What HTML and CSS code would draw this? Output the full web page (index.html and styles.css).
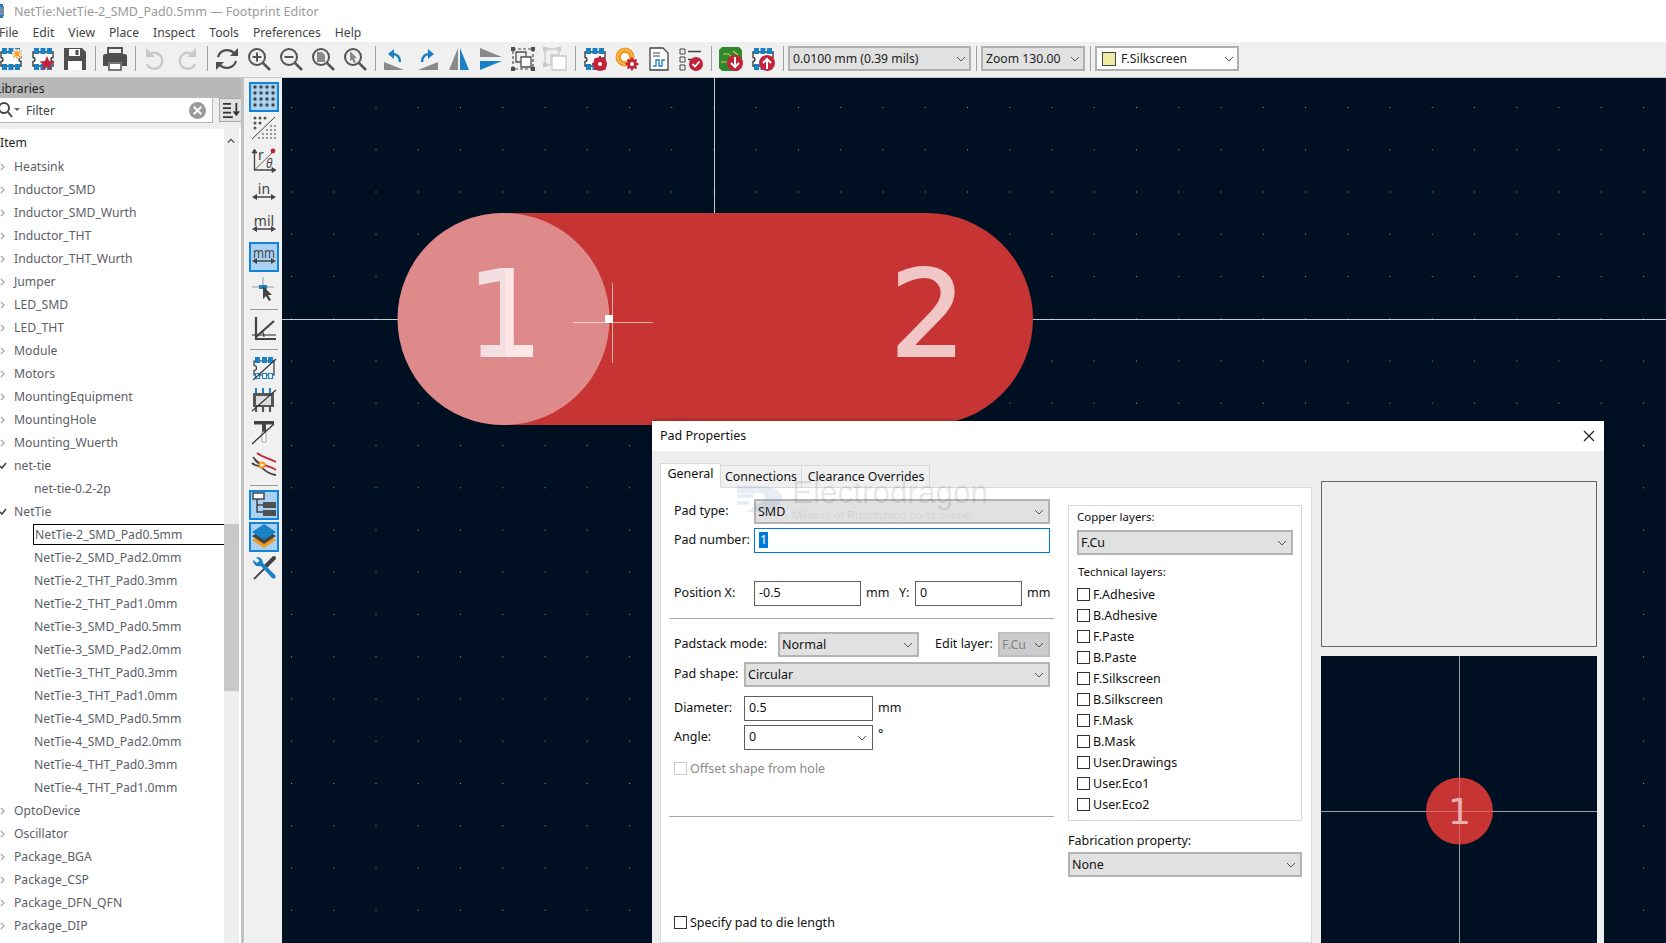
FILE: index.html
```html
<!DOCTYPE html>
<html lang="en">
<head>
<meta charset="utf-8">
<title>Footprint Editor</title>
<link rel="stylesheet" href="styles.css">
</head>
<body>
<svg class="defs" width="0" height="0" aria-hidden="true">
  <defs>
    <symbol id="chev" viewBox="0 0 10 6"><path d="M1 1l4 4 4-4" fill="none" stroke="#555" stroke-width="1"/></symbol>
    <symbol id="chip" viewBox="0 0 24 24">
      <path d="M2 5h20v5.500a2 2 0 0 0 0 4V19H2v-4.500a2 2 0 0 0 0-4z" fill="#fff" stroke="#333" stroke-width="1.300"/>
      <path d="M3 1h5v6H3zM9.500 1h5v6h-5zM16 1h5v6h-5zM3 17h5v6H3zM9.500 17h5v6h-5zM16 17h5v6h-5z" fill="#1a81c4"/>
    </symbol>
    <symbol id="mag" viewBox="0 0 24 24">
      <circle cx="10" cy="10" r="8" fill="none" stroke="#545454" stroke-width="2"/>
      <path d="M16 16l7 7" stroke="#545454" stroke-width="2.500"/>
    </symbol>
  </defs>
</svg>

<header class="titlebar">
  <svg class="app-icon" viewBox="0 0 14 14"><rect x="0" y="2" width="9" height="10" fill="#6d8ea8"/><path d="M0 0h3v3H0zM5 0h3v3H5zM0 11h3v3H0zM5 11h3v3H5z" fill="#1a81c4"/></svg>
  <span class="title-text">NetTie:NetTie-2_SMD_Pad0.5mm — Footprint Editor</span>
</header>

<nav class="menubar">
  <span>File</span><span>Edit</span><span>View</span><span>Place</span><span>Inspect</span><span>Tools</span><span>Preferences</span><span>Help</span>
</nav>

<div class="toolbar">
  <span class="tool"><svg viewBox="0 0 24 24"><use href="#chip"/><circle cx="18" cy="7" r="5" fill="#fff"/><path d="M18 2v10M13 7h10M14.500 3.500l7 7M21.500 3.500l-7 7" stroke="#f39a1e" stroke-width="1.200"/></svg></span>
  <span class="tool"><svg viewBox="0 0 24 24"><use href="#chip"/><path d="M16 9l2.200 5 5.300.4-4 3.500 1.300 5.300-4.800-2.900-4.800 2.900 1.300-5.300-4-3.500 5.300-.4z" fill="#c1243a"/></svg></span>
  <span class="tool"><svg viewBox="0 0 24 24"><path d="M1 1h18l4 4v18H1z" fill="#4f4f4f"/><path d="M6 2h11v7H6z" fill="#fff"/><path d="M12.500 3h3v5h-3z" fill="#4f4f4f"/><path d="M5 14h14v9H5z" fill="#fff"/></svg></span>
  <span class="tool-sep"></span>
  <span class="tool"><svg viewBox="0 0 24 24"><path d="M5 1h14v6H5z" fill="none" stroke="#4f4f4f" stroke-width="1.800"/><path d="M0 9a2 2 0 0 1 2-2h20a2 2 0 0 1 2 2v10h-5v-4H5v4H0z" fill="#4f4f4f"/><path d="M6 16h12v7H6z" fill="#fff" stroke="#4f4f4f" stroke-width="1.500"/></svg></span>
  <span class="tool-sep"></span>
  <span class="tool"><svg viewBox="0 0 24 24"><path d="M7 7a8 8 0 1 1-3 10" fill="none" stroke="#c9c9c9" stroke-width="2.400"/><path d="M3 1v9h9z" fill="#c9c9c9"/></svg></span>
  <span class="tool"><svg viewBox="0 0 24 24"><path d="M17 7a8 8 0 1 0 3 10" fill="none" stroke="#c9c9c9" stroke-width="2.400"/><path d="M21 1v9h-9z" fill="#c9c9c9"/></svg></span>
  <span class="tool-sep"></span>
  <span class="tool"><svg viewBox="0 0 24 24"><path d="M3 10a9.500 9.500 0 0 1 16-4M21 14a9.500 9.500 0 0 1-16 4" fill="none" stroke="#4f4f4f" stroke-width="2.200"/><path d="M23 1v8h-8zM1 23v-8h8z" fill="#4f4f4f"/></svg></span>
  <span class="tool"><svg viewBox="0 0 24 24"><use href="#mag"/><path d="M10 5.500v9M5.500 10h9" stroke="#545454" stroke-width="2"/></svg></span>
  <span class="tool"><svg viewBox="0 0 24 24"><use href="#mag"/><path d="M5.500 10h9" stroke="#545454" stroke-width="2"/></svg></span>
  <span class="tool"><svg viewBox="0 0 24 24"><use href="#mag"/><path d="M6 5h5l3 3v7H6z" fill="#8a8a8a"/></svg></span>
  <span class="tool"><svg viewBox="0 0 24 24"><use href="#mag"/><path d="M7 4l7 7-3 .5 2 3.500-2 1-2-3.500-2 2z" fill="#8a8a8a"/></svg></span>
  <span class="tool-sep"></span>
  <span class="tool"><svg viewBox="0 0 24 24"><path d="M1 15l20 8H1z" fill="#8a8a8a"/><path d="M17 15c0-5-3-8-7-8" fill="none" stroke="#1a81c4" stroke-width="2.400"/><path d="M11 2v10l-6-5z" fill="#1a81c4"/></svg></span>
  <span class="tool"><svg viewBox="0 0 24 24"><path d="M23 15L3 23h20z" fill="#8a8a8a"/><path d="M7 15c0-5 3-8 7-8" fill="none" stroke="#1a81c4" stroke-width="2.400"/><path d="M13 2v10l6-5z" fill="#1a81c4"/></svg></span>
  <span class="tool"><svg viewBox="0 0 24 24"><path d="M11 1v22H2z" fill="#8a8a8a"/><path d="M13 1v22h9z" fill="#1a81c4"/></svg></span>
  <span class="tool"><svg viewBox="0 0 24 24"><path d="M1 1l22 9H1z" fill="#8a8a8a"/><path d="M1 14h22L1 23z" fill="#1a81c4"/></svg></span>
  <span class="tool"><svg viewBox="0 0 24 24"><path d="M2 2h20v20H2z" fill="none" stroke="#4f4f4f" stroke-width="1.200" stroke-dasharray="3 2"/><path d="M0 0h4v4H0zM20 0h4v4h-4zM0 20h4v4H0zM20 20h4v4h-4z" fill="#4f4f4f"/><path d="M5 5h10v10H5z" fill="none" stroke="#4f4f4f" stroke-width="1.300"/><path d="M10 10h10v10H10z" fill="#fff" stroke="#4f4f4f" stroke-width="1.300"/></svg></span>
  <span class="tool"><svg viewBox="0 0 24 24"><path d="M2 2h14v6H8v10H2z" fill="none" stroke="#c9c9c9" stroke-width="1.300"/><path d="M0 0h4v4H0zM14 0h4v4h-4zM0 16h4v4H0z" fill="#c9c9c9"/><path d="M9 9h14v14H9z" fill="#fff" stroke="#c9c9c9" stroke-width="1.300"/></svg></span>
  <span class="tool-sep"></span>
  <span class="tool"><svg viewBox="0 0 24 24"><use href="#chip"/><circle cx="17" cy="17" r="7" fill="#c1243a"/><circle cx="17" cy="17" r="2.500" fill="#fff"/><path d="M17 9v16M9 17h16M11.500 11.500l11 11M22.500 11.500l-11 11" stroke="#c1243a" stroke-width="2"/><circle cx="17" cy="17" r="2" fill="#fff"/></svg></span>
  <span class="tool"><svg viewBox="0 0 24 24"><circle cx="10" cy="10" r="8.500" fill="none" stroke="#f39a1e" stroke-width="2"/><circle cx="10" cy="10" r="5.500" fill="#fff" stroke="#f39a1e" stroke-width="3"/><circle cx="17" cy="17" r="5" fill="#c1243a"/><path d="M17 10.500v13M10.500 17h13M12.500 12.500l9 9M21.500 12.500l-9 9" stroke="#c1243a" stroke-width="2"/><circle cx="17" cy="17" r="2" fill="#fff"/></svg></span>
  <span class="tool"><svg viewBox="0 0 24 24"><path d="M3 1h13l5 5v17H3z" fill="#fff" stroke="#444" stroke-width="1.300"/><path d="M6 6h7M6 9h7" stroke="#444"/><path d="M6 19h3v-6h3v6h3v-6h3" fill="none" stroke="#1a81c4" stroke-width="1.300"/></svg></span>
  <span class="tool"><svg viewBox="0 0 24 24"><path d="M1 2h5v5H1zM1 10h5v5H1zM1 18h5v5H1z" fill="none" stroke="#444"/><path d="M9 4.500h13M9 12.500h3" stroke="#444" stroke-width="1.400"/><circle cx="17" cy="17" r="7" fill="#c1243a"/><path d="M13.500 17l2.500 2.500 4.500-5" fill="none" stroke="#fff" stroke-width="1.800"/></svg></span>
  <span class="tool-sep"></span>
  <span class="tool"><svg viewBox="0 0 24 24"><path d="M3 0h17l3 3v17l-4 4H3l-3-3V3z" fill="#2f8a2f"/><path d="M4 7h6l3 4M2 15l6 0M14 4l5 4" fill="none" stroke="#d9c94a" stroke-width="1.200"/><circle cx="16" cy="16" r="8" fill="#c1243a"/><path d="M16 10v10M12 16l4 4 4-4" fill="none" stroke="#fff" stroke-width="2"/></svg></span>
  <span class="tool"><svg viewBox="0 0 24 24"><use href="#chip"/><circle cx="16" cy="16" r="8" fill="#c1243a"/><path d="M16 22V12M12 16l4-4 4 4" fill="none" stroke="#fff" stroke-width="2"/></svg></span>
  <span class="tool-sep"></span>
  <div class="combo combo-grid"><span>0.0100 mm (0.39 mils)</span><svg class="chev"><use href="#chev"/></svg></div>
  <span class="tool-sep tool-sep-narrow"></span>
  <div class="combo combo-zoom"><span>Zoom 130.00</span><svg class="chev"><use href="#chev"/></svg></div>
  <span class="tool-sep tool-sep-narrow"></span>
  <div class="combo combo-layer"><i class="swatch"></i><span>F.Silkscreen</span><svg class="chev"><use href="#chev"/></svg></div>
</div>

<main class="workspace">
  <aside class="sidebar">
    <div class="side-title"><span>Libraries</span></div>
    <div class="filter-row">
      <div class="filter">
        <svg class="filter-mag" viewBox="0 0 24 16"><circle cx="5" cy="6" r="5" fill="none" stroke="#444" stroke-width="2"/><path d="M9 10l4 5" stroke="#444" stroke-width="2"/><path d="M15 6h6l-3 3z" fill="#666"/></svg>
        <span class="filter-text">Filter</span>
        <svg class="filter-clear" viewBox="0 0 18 18"><circle cx="9" cy="9" r="9" fill="#9a9a9a"/><path d="M5 5l8 8M13 5l-8 8" stroke="#fff" stroke-width="2"/></svg>
      </div>
      <div class="sort-btn"><svg viewBox="0 0 20 18"><path d="M1 2h9M1 7h9M1 12h9M1 17h11" stroke="#333" stroke-width="2"/><path d="M16 1v13M13 10.500l3 4 3-4" fill="none" stroke="#333" stroke-width="2"/></svg></div>
    </div>
    <div class="tree-wrap">
      <div class="tree">
        <div class="tree-head">Item</div>
        <div class="node"><svg class="tw"><path d="M1 1l3 3-3 3"/></svg>Heatsink</div>
        <div class="node"><svg class="tw"><path d="M1 1l3 3-3 3"/></svg>Inductor_SMD</div>
        <div class="node"><svg class="tw"><path d="M1 1l3 3-3 3"/></svg>Inductor_SMD_Wurth</div>
        <div class="node"><svg class="tw"><path d="M1 1l3 3-3 3"/></svg>Inductor_THT</div>
        <div class="node"><svg class="tw"><path d="M1 1l3 3-3 3"/></svg>Inductor_THT_Wurth</div>
        <div class="node"><svg class="tw"><path d="M1 1l3 3-3 3"/></svg>Jumper</div>
        <div class="node"><svg class="tw"><path d="M1 1l3 3-3 3"/></svg>LED_SMD</div>
        <div class="node"><svg class="tw"><path d="M1 1l3 3-3 3"/></svg>LED_THT</div>
        <div class="node"><svg class="tw"><path d="M1 1l3 3-3 3"/></svg>Module</div>
        <div class="node"><svg class="tw"><path d="M1 1l3 3-3 3"/></svg>Motors</div>
        <div class="node"><svg class="tw"><path d="M1 1l3 3-3 3"/></svg>MountingEquipment</div>
        <div class="node"><svg class="tw"><path d="M1 1l3 3-3 3"/></svg>MountingHole</div>
        <div class="node"><svg class="tw"><path d="M1 1l3 3-3 3"/></svg>Mounting_Wuerth</div>
        <div class="node"><svg class="tw tw-open"><path d="M0 4l2 2 4-5"/></svg>net-tie</div>
        <div class="node child">net-tie-0.2-2p</div>
        <div class="node"><svg class="tw tw-open"><path d="M0 4l2 2 4-5"/></svg>NetTie</div>
        <div class="node child selected"><span>NetTie-2_SMD_Pad0.5mm</span></div>
        <div class="node child">NetTie-2_SMD_Pad2.0mm</div>
        <div class="node child">NetTie-2_THT_Pad0.3mm</div>
        <div class="node child">NetTie-2_THT_Pad1.0mm</div>
        <div class="node child">NetTie-3_SMD_Pad0.5mm</div>
        <div class="node child">NetTie-3_SMD_Pad2.0mm</div>
        <div class="node child">NetTie-3_THT_Pad0.3mm</div>
        <div class="node child">NetTie-3_THT_Pad1.0mm</div>
        <div class="node child">NetTie-4_SMD_Pad0.5mm</div>
        <div class="node child">NetTie-4_SMD_Pad2.0mm</div>
        <div class="node child">NetTie-4_THT_Pad0.3mm</div>
        <div class="node child">NetTie-4_THT_Pad1.0mm</div>
        <div class="node"><svg class="tw"><path d="M1 1l3 3-3 3"/></svg>OptoDevice</div>
        <div class="node"><svg class="tw"><path d="M1 1l3 3-3 3"/></svg>Oscillator</div>
        <div class="node"><svg class="tw"><path d="M1 1l3 3-3 3"/></svg>Package_BGA</div>
        <div class="node"><svg class="tw"><path d="M1 1l3 3-3 3"/></svg>Package_CSP</div>
        <div class="node"><svg class="tw"><path d="M1 1l3 3-3 3"/></svg>Package_DFN_QFN</div>
        <div class="node"><svg class="tw"><path d="M1 1l3 3-3 3"/></svg>Package_DIP</div>
      </div>
      <div class="scrollbar">
        <svg class="scroll-up" viewBox="0 0 10 6"><path d="M1 5l4-4 4 4" fill="none" stroke="#444" stroke-width="1.500"/></svg>
        <div class="scroll-thumb"></div>
      </div>
    </div>
  </aside>

  <div class="strip">
    <span class="sbtn on"><svg viewBox="0 0 24 24"><g fill="#444"><circle cx="3" cy="3" r="1.700"/><circle cx="9" cy="3" r="1.700"/><circle cx="15" cy="3" r="1.700"/><circle cx="21" cy="3" r="1.700"/><circle cx="3" cy="9" r="1.700"/><circle cx="9" cy="9" r="1.700"/><circle cx="15" cy="9" r="1.700"/><circle cx="21" cy="9" r="1.700"/><circle cx="3" cy="15" r="1.700"/><circle cx="9" cy="15" r="1.700"/><circle cx="15" cy="15" r="1.700"/><circle cx="21" cy="15" r="1.700"/><circle cx="3" cy="21" r="1.700"/><circle cx="9" cy="21" r="1.700"/><circle cx="15" cy="21" r="1.700"/><circle cx="21" cy="21" r="1.700"/></g></svg></span>
    <span class="sbtn"><svg viewBox="0 0 24 24"><g fill="#555"><circle cx="3" cy="2" r="1.500"/><circle cx="8" cy="2" r="1.500"/><circle cx="13" cy="2" r="1.500"/><circle cx="3" cy="7" r="1.500"/><circle cx="8" cy="7" r="1.500"/><circle cx="3" cy="12" r="1.500"/></g><g fill="#999"><path d="M18 9h2v2h-2zM22 9h2v2h-2zM14 13h2v2h-2zM18 13h2v2h-2zM22 13h2v2h-2zM10 17h2v2h-2zM14 17h2v2h-2zM18 17h2v2h-2zM22 17h2v2h-2zM6 21h2v2H6zM10 21h2v2h-2zM14 21h2v2h-2zM18 21h2v2h-2zM22 21h2v2h-2z"/></g><path d="M0 23L23 1" stroke="#444"/></svg></span>
    <span class="sbtn"><svg viewBox="0 0 24 24"><path d="M2.500 2v20H23" fill="none" stroke="#444" stroke-width="1.300"/><path d="M0 5l2.500-4L5 5zM20 19.500l4 2.500-4 2.500zM2.500 22L22 3" fill="#444" stroke="#444" stroke-width=".8"/><circle cx="21" cy="3" r="2.400" fill="#c1243a"/><text x="6" y="12" class="icon-text it-r">r</text><text x="14" y="20" class="icon-text it-t">θ</text></svg></span>
    <span class="sbtn"><svg viewBox="0 0 24 24"><text x="12" y="14" text-anchor="middle" class="icon-text it-u">in</text><path d="M2 17h20" stroke="#444" stroke-width="1.500"/><path d="M0 17l5-3v6zM24 17l-5-3v6z" fill="#444"/></svg></span>
    <span class="sbtn"><svg viewBox="0 0 24 24"><text x="12" y="14" text-anchor="middle" class="icon-text it-u">mil</text><path d="M2 17h20" stroke="#444" stroke-width="1.500"/><path d="M0 17l5-3v6zM24 17l-5-3v6z" fill="#444"/></svg></span>
    <span class="sbtn on"><svg viewBox="0 0 24 24"><text x="1" y="14" textLength="22" lengthAdjust="spacingAndGlyphs" class="icon-text it-u">mm</text><path d="M2 17h20" stroke="#444" stroke-width="1.500"/><path d="M0 17l5-3v6zM24 17l-5-3v6z" fill="#444"/></svg></span>
    <span class="sbtn"><svg viewBox="0 0 24 24"><path d="M11 1v9M0 11h22" stroke="#999"/><rect x="7" y="9" width="8" height="4" fill="#1a81c4"/><path d="M11 10v13l3-3 3 5 2-1-3-5h4z" fill="#444"/></svg></span>
    <span class="strip-sep"></span>
    <span class="sbtn"><svg viewBox="0 0 24 24"><path d="M4 1v22H24" fill="none" stroke="#444" stroke-width="2.200"/><path d="M0 19h24" stroke="#444" stroke-width="1.200"/><path d="M4 21L22 5" stroke="#444" stroke-width="2.200"/><path d="M10 15a8 8 0 0 1 2 6" fill="none" stroke="#444" stroke-width="1.200"/></svg></span>
    <span class="strip-sep"></span>
    <span class="sbtn"><svg viewBox="0 0 24 24"><path d="M2 5h20v14H2v-4.500a2.500 2.500 0 0 0 0-5z" fill="none" stroke="#333" stroke-width="1.200"/><path d="M3 1h5v6H3zM10 1h5v6h-5zM16 1h5v6h-5z" fill="#1a81c4"/><path d="M3.500 17.500h4v5h-4zM10.500 17.500h4v5h-4zM16.500 17.500h4v5h-4z" fill="#fff" stroke="#1a81c4" stroke-width="1.200"/><path d="M1 24L24 3" stroke="#333" stroke-width="1.200"/></svg></span>
    <span class="sbtn"><svg viewBox="0 0 24 24"><path d="M4 0v6M11 0v6M18 0v6" stroke="#1a81c4" stroke-width="2"/><rect x="1" y="5" width="21" height="14" fill="#555"/><rect x="4" y="8" width="15" height="9" fill="#ddd"/><path d="M4 19v5M11 19v5M18 19v5" stroke="#555" stroke-width="2.200"/><path d="M0 23L24 2" stroke="#333" stroke-width="1.200"/></svg></span>
    <span class="sbtn"><svg viewBox="0 0 24 24"><path d="M2 1h20v3.500H14V12h-4V4.500H2z" fill="#444"/><path d="M10 12h4v10h-4z" fill="#fff" stroke="#aaa"/><path d="M0 24L22 4" stroke="#333" stroke-width="1.200"/></svg></span>
    <span class="sbtn"><svg viewBox="0 0 24 24"><path d="M5 1c6 5 10 4 19 9M3 8c6 6 14 5 21 10" fill="none" stroke="#c1243a" stroke-width="1.800"/><path d="M0 11c3 3 6 2 9 4s6 7 15 8" fill="none" stroke="#444" stroke-width="1.800"/><path d="M1 5L8 13" fill="none" stroke="#444" stroke-width="1.800"/><circle cx="10" cy="13" r="2.600" fill="#fff" stroke="#f39a1e" stroke-width="2"/></svg></span>
    <span class="strip-sep"></span>
    <span class="sbtn on"><svg viewBox="0 0 24 24"><rect x="1" y="1" width="11" height="6" fill="#fff" stroke="#444" stroke-width="1.500"/><path d="M5 7v13h6M5 13h6" fill="none" stroke="#444" stroke-width="1.500"/><rect x="11" y="10" width="13" height="6" fill="#4f4f4f"/><rect x="11" y="18" width="13" height="6" fill="#4f4f4f"/></svg></span>
    <span class="sbtn on"><svg viewBox="0 0 24 24"><path d="M12 9l12 7-12 8-12-8z" fill="#f39a1e"/><path d="M12 5l12 7-12 8-12-8z" fill="#444"/><path d="M12 0l12 8-12 8L0 8z" fill="#1a81c4"/></svg></span>
    <span class="sbtn"><svg viewBox="0 0 24 24"><path d="M15 10L2 23" stroke="#444" stroke-width="1.800"/><path d="M14 10l8-8" stroke="#444" stroke-width="4" stroke-linecap="round"/><path d="M1 4a6 6 0 0 0 8 6l11 12a2 2 0 0 0 3-3L11 7a6 6 0 0 0-7-6l3.500 3.500-2.500 2.500z" fill="#1a81c4"/></svg></span>
  </div>

  <section class="canvas">
    <svg class="board" viewBox="282 78 1384 865" preserveAspectRatio="xMinYMin">
      <defs>
        <pattern id="gridDots" x="291" y="107" width="42.25" height="42.25" patternUnits="userSpaceOnUse"><rect width="1" height="1" fill="#8d949c"/></pattern>
        <linearGradient id="oneFill" gradientUnits="userSpaceOnUse" x1="478" x2="531" y1="0" y2="0"><stop offset=".5" stop-color="#f3dfe2"/><stop offset=".5" stop-color="#fee6e7"/></linearGradient>
      </defs>
      <rect x="282" y="78" width="1384" height="865" fill="url(#gridDots)"/>
      <path d="M714.500 78V213M282 319.500H398M1033 319.500H1666" stroke="#c8cbce"/>
      <rect x="398" y="213" width="635" height="212" rx="106" fill="#c63434"/>
      <circle cx="503.500" cy="319" r="106" fill="#df8a8a"/>
      <text x="505" y="356" text-anchor="middle" class="pad-num" fill="url(#oneFill)" stroke="url(#oneFill)">1</text>
      <text x="928" y="356" text-anchor="middle" class="pad-num" fill="#f1c6c6" stroke="#f1c6c6">2</text>
      <path d="M612.500 283V363M573 322.500H653" stroke="#fff" stroke-opacity=".6"/>
      <rect x="605" y="315" width="8" height="8" fill="#fff"/>
    </svg>

    <div class="dialog">
      <div class="dlg-title">
        <span>Pad Properties</span>
        <svg class="dlg-close" viewBox="0 0 12 12"><path d="M1 1l10 10M11 1L1 11" stroke="#222" stroke-width="1.200"/></svg>
      </div>
      <div class="dlg-body">
        <div class="notebook">
          <div class="tabs">
            <span class="tab active">General</span><span class="tab tab-conn">Connections</span><span class="tab tab-clear">Clearance Overrides</span>
          </div>
          <div class="panel">
            <div class="watermark">
              <svg class="wm-logo" viewBox="0 0 45 32"><path d="M0 6h22c12 0 22 4 23 11 0 7-8 13-18 15H10l10-8c5-1 8-4 8-7 0-2-2-4-6-4H0zM0 14h16v4H0zM0 21h12v4H0z" fill="#6f8fc0" fill-opacity=".16"/></svg>
              <div class="wm-text">
                <span class="wm-big">Electrodragon</span>
                <span class="wm-small">Millions of Prototyping parts online!</span>
              </div>
            </div>
            <div class="col-left">
              <div class="row row-first"><label class="lbl w80">Pad type:</label><div class="select grow"><span>SMD</span><svg class="chev"><use href="#chev"/></svg></div></div>
              <div class="row gap-4"><label class="lbl w80">Pad number:</label><div class="input focus grow"><span class="selected-text">1</span></div></div>
              <div class="row gap-28">
                <label class="lbl w80">Position X:</label><div class="input w107"><span>-0.5</span></div>
                <span class="unit u-mm">mm</span><label class="lbl lbl-y">Y:</label><div class="input w107"><span>0</span></div><span class="unit">mm</span>
              </div>
              <hr class="rule rule-a">
              <div class="row">
                <label class="lbl w104">Padstack mode:</label><div class="select w141"><span>Normal</span><svg class="chev"><use href="#chev"/></svg></div>
                <label class="lbl lbl-edit">Edit layer:</label><div class="select disabled w52"><span>F.Cu</span><svg class="chev"><use href="#chev"/></svg></div>
              </div>
              <div class="row gap-5"><label class="lbl w70">Pad shape:</label><div class="select grow"><span>Circular</span><svg class="chev"><use href="#chev"/></svg></div></div>
              <div class="row gap-9"><label class="lbl w70">Diameter:</label><div class="input w129"><span>0.5</span></div><span class="unit">mm</span></div>
              <div class="row gap-4"><label class="lbl w70">Angle:</label><div class="input w129 input-combo"><span>0</span><svg class="chev"><use href="#chev"/></svg></div><span class="unit unit-deg">°</span></div>
              <div class="check-row dim offset-row"><i class="box"></i><span>Offset shape from hole</span></div>
              <hr class="rule rule-b">
              <div class="check-row die-row"><i class="box"></i><span>Specify pad to die length</span></div>
            </div>
            <div class="col-right">
              <div class="group">
                <div class="group-label">Copper layers:</div>
                <div class="select"><span>F.Cu</span><svg class="chev"><use href="#chev"/></svg></div>
                <div class="group-label tech">Technical layers:</div>
                <div class="check-list">
                  <div class="check-row"><i class="box"></i><span>F.Adhesive</span></div>
                  <div class="check-row"><i class="box"></i><span>B.Adhesive</span></div>
                  <div class="check-row"><i class="box"></i><span>F.Paste</span></div>
                  <div class="check-row"><i class="box"></i><span>B.Paste</span></div>
                  <div class="check-row"><i class="box"></i><span>F.Silkscreen</span></div>
                  <div class="check-row"><i class="box"></i><span>B.Silkscreen</span></div>
                  <div class="check-row"><i class="box"></i><span>F.Mask</span></div>
                  <div class="check-row"><i class="box"></i><span>B.Mask</span></div>
                  <div class="check-row"><i class="box"></i><span>User.Drawings</span></div>
                  <div class="check-row"><i class="box"></i><span>User.Eco1</span></div>
                  <div class="check-row"><i class="box"></i><span>User.Eco2</span></div>
                </div>
              </div>
              <div class="fab-label">Fabrication property:</div>
              <div class="select"><span>None</span><svg class="chev"><use href="#chev"/></svg></div>
            </div>
          </div>
        </div>
        <div class="preview">
          <div class="preview-top"></div>
          <div class="preview-canvas">
            <svg class="preview-svg" viewBox="0 0 276 287" preserveAspectRatio="xMinYMin">
              <path d="M138.500 0V287M0 155.500H276" stroke="#9a9ea3"/>
              <circle cx="138.500" cy="155" r="33.500" fill="#c63434"/>
              <path d="M138.500 122v66M105 155.500h67" stroke="#d98a8a" stroke-opacity=".6"/>
              <text x="138.500" y="168" text-anchor="middle" class="preview-num">1</text>
            </svg>
          </div>
        </div>
      </div>
    </div>
  </section>
</main>
</body>
</html>
```

FILE: styles.css
```css
* { box-sizing: border-box; }
html, body { margin: 0; height: 100%; overflow: hidden; }
body {
  display: flex;
  flex-direction: column;
  height: 943px;
  width: 1666px;
  font-family: "Noto Sans", "Open Sans", sans-serif;
  font-size: 12.5px;
  color: #1a1a1a;
  background: #f0f0f0;
}
.defs { position: absolute; }

/* window chrome */
.titlebar {
  height: 22px;
  background: #fff;
  display: flex;
  align-items: center;
  color: #9a9a9a;
  flex: none;
}
.app-icon { width: 14px; height: 14px; margin-left: -5px; margin-right: 5px; }
.menubar {
  height: 20px;
  background: #fff;
  display: flex;
  align-items: center;
  gap: 14px;
  color: #444;
  font-size: 12.2px;
  flex: none;
  margin-left: -1px;
}

/* main toolbar */
.toolbar {
  height: 36px;
  flex: none;
  display: flex;
  align-items: center;
  margin-left: -5px;
  padding-bottom: 2px;
  background: #f0f0f0;
  border-bottom: 1px solid #c9c9c9;
  font-size: 12.2px;
}
.tool { width: 32px; height: 24px; flex: none; display: flex; justify-content: center; }
.tool svg { width: 24px; height: 24px; display: block; }
.tool-sep { width: 8px; height: 25px; flex: none; display: flex; justify-content: center; position: relative; }
.tool-sep::before { content: ""; width: 1px; background: #a0a0a0; }
.tool-sep-narrow { width: 10px; }
.combo {
  height: 25px;
  display: flex;
  align-items: center;
  justify-content: space-between;
  border: 2px solid #b0b0b0;
  background: #e1e1e1;
  padding: 0 3px 0 3px;
  flex: none;
  color: #222;
}
.combo-grid { width: 183px; margin-left: 1px; }
.combo-zoom { width: 104px; }
.combo-layer { width: 144px; background: #fff; gap: 5px; justify-content: flex-start; padding-left: 5px; }
.combo-layer .chev { margin-left: auto; }
.chev { width: 10px; height: 6px; flex: none; }
.swatch { width: 14px; height: 14px; background: #f3eba4; border: 1px solid #444; flex: none; }

.workspace { flex: 1; display: flex; min-height: 0; }

/* libraries */
.sidebar { width: 241px; flex: none; display: flex; flex-direction: column; background: #eee; font-size: 12.2px; }
.side-title { height: 20px; background: #b8b8b8; display: flex; align-items: center; color: #222; margin-right: -1px; }
.side-title span { margin-left: -5px; }
.filter-row { height: 31px; display: flex; align-items: flex-start; }
.filter {
  width: 213px; height: 25px;
  background: #fff;
  border-bottom: 1px solid #b5b5b5;
  border-right: 1px solid #b5b5b5;
  display: flex; align-items: center;
  color: #444;
}
.filter-mag { width: 24px; height: 16px; flex: none; margin-left: -1px; }
.filter-text { margin-left: 3px; }
.filter-clear { width: 17px; height: 17px; margin-left: auto; margin-right: 6px; }
.sort-btn {
  width: 23px; height: 24px; margin-left: 6px; margin-right: -1px;
  background: #e1e1e1; border: 1px solid #aaa;
  display: flex; align-items: center; justify-content: center;
}
.sort-btn svg { width: 18px; height: 16px; }
.tree-wrap { flex: 1; display: flex; min-height: 0; background: #fff; }
.tree { flex: 1; min-width: 0; overflow: hidden; }
.tree-head { height: 26px; display: flex; align-items: center; color: #222; }
.node { height: 23px; line-height: 23px; padding-left: 14px; color: #5c6068; position: relative; white-space: nowrap; }
.node.child { padding-left: 34px; }
.node.selected { padding: 1px 0 1px 33px; line-height: 19px; }
.node.selected span { display: block; height: 21px; border: 1px solid #000; border-right: 0; padding-left: 1px; }
.tw { position: absolute; left: 0; top: 8px; width: 7px; height: 8px; fill: none; stroke: #aaa; stroke-width: 1.400; }
.tw-open { stroke: #444; stroke-width: 1.600; }
.scrollbar { width: 15px; flex: none; background: #eee; position: relative; margin-right: 2px; }
.scroll-up { position: absolute; left: 3px; top: 9px; width: 8px; height: 6px; }
.scroll-thumb { position: absolute; left: 0; right: 0; top: 395px; height: 167px; background: #c8c8c8; }

/* vertical tool strip */
.strip {
  width: 41px;
  flex: none;
  border-left: 3px solid #c2c2c2;
  padding: 3px 0 0 5px;
  display: flex;
  flex-direction: column;
  background: #f0f0f0;
}
.sbtn { width: 30px; height: 30px; margin: 1px 0; display: flex; align-items: center; justify-content: center; flex: none; border: 2px solid transparent; }
.sbtn svg { width: 24px; height: 24px; margin-top: -2px; overflow: visible; }
.sbtn.on { background: #a9d1f3; border-color: #1183d8; }
.strip-sep { height: 8px; flex: none; display: flex; align-items: center; margin-left: 1px; width: 28px; }
.strip-sep::before { content: ""; display: block; width: 100%; height: 1px; background: #9a9a9a; }
.icon-text { font-family: "Noto Sans", sans-serif; fill: #444; }
.it-r { font-size: 14px; }
.it-t { font-size: 12px; font-style: italic; }
.it-u { font-size: 14px; }

/* canvas */
.canvas { flex: 1; position: relative; background: #001023; overflow: hidden; }
.board { display: block; width: 100%; height: 100%; }
.pad-num { font-family: "DejaVu Sans", sans-serif; font-size: 120px; stroke-width: 2px; }

/* dialog window */
.dialog {
  position: absolute;
  left: 370px;
  top: 343px;
  width: 952px;
  height: 522px;
  background: #eee;
  color: #111;
  box-shadow: 0 0 4px rgba(0, 0, 0, .4);
}
.dlg-title { height: 30px; background: #fff; display: flex; align-items: center; justify-content: space-between; padding: 0 9px 2px 8px; }
.dlg-close { width: 12px; height: 12px; margin-top: 2px; }
.dlg-body { display: flex; gap: 9px; padding: 12px 7px 0 8px; height: 492px; }
.notebook { width: 652px; flex: none; display: flex; flex-direction: column; }
.tabs { height: 25px; display: flex; align-items: flex-end; flex: none; position: relative; z-index: 1; margin-bottom: -1px; }
.tab { height: 23px; border: 1px solid #d9d9d9; border-left-width: 0; display: flex; align-items: center; justify-content: center; background: #f0f0f0; white-space: nowrap; font-size: 12.3px; }
.tab-conn { width: 81px; }
.tab-clear { width: 128px; padding-left: 1px; }
.tab.active { height: 25px; width: 61px; border-left-width: 1px; background: #fff; border-bottom-color: #fff; padding: 0 0 4px; font-size: 12.5px; }
.panel { flex: 1; background: #fff; border: 1px solid #d9d9d9; display: flex; gap: 14px; padding-left: 8px; position: relative; min-height: 0; }
.watermark { position: absolute; left: 76px; top: -9px; display: flex; gap: 10px; align-items: flex-start; pointer-events: none; z-index: 2; }
.wm-logo { width: 45px; height: 32px; margin-top: 1px; }
.wm-text { display: flex; flex-direction: column; margin-top: -1px; }
.wm-big { font-family: "Liberation Sans", sans-serif; font-size: 31.5px; line-height: 29px; color: rgba(0, 0, 0, .1); }
.wm-small { font-family: "Liberation Sans", sans-serif; font-size: 11.7px; line-height: 15px; color: rgba(0, 0, 0, .08); }

.col-left { width: 385px; flex: none; display: flex; flex-direction: column; }
.col-right { width: 234px; flex: none; padding-top: 17px; display: flex; flex-direction: column; }
.row { height: 25px; display: flex; align-items: center; flex: none; padding-left: 5px; padding-right: 4px; }
.row-first { margin-top: 11px; }
.gap-4 { margin-top: 4px; }
.gap-5 { margin-top: 5px; }
.gap-9 { margin-top: 9px; }
.gap-28 { margin-top: 28px; }
.lbl { flex: none; padding-bottom: 2px; }
.w70 { width: 70px; }
.w80 { width: 80px; }
.w104 { width: 104px; }
.w107 { width: 107px; }
.w129 { width: 129px; }
.w141 { width: 141px; }
.w52 { width: 52px; }
.grow { flex: 1; }
.select, .input {
  height: 25px;
  display: flex;
  align-items: center;
  justify-content: space-between;
  flex-shrink: 0;
  white-space: nowrap;
}
.select { background: #e1e1e1; border: 2px solid #b4b4b4; padding: 0 4px 0 2px; }
.input { background: #fff; border: 1px solid #606060; padding: 0 5px 0 4px; }
.input span { margin-bottom: 2px; }
.input.grow { flex: 1; }
.input.focus { border-color: #0078d7; justify-content: flex-start; }
.selected-text { background: #0078d7; color: #fff; padding: 0 1px; height: 16px; line-height: 16px; }
.select.disabled { background: #ccc; color: #838383; border-color: #bfbfbf; }
.unit { margin-left: 5px; flex: none; padding-bottom: 2px; }
.u-mm { width: 33px; }
.lbl-y { width: 16px; }
.unit-deg { align-self: flex-start; line-height: 18px; }
.lbl-edit { margin-left: 16px; width: 63px; }
.rule { height: 1px; border: 0; background: #a8a8a8; margin: 0; flex: none; }
.rule-a { margin-top: 12px; margin-bottom: 13px; }
.rule-b { margin-top: 41px; }
.check-row { display: flex; align-items: center; gap: 3px; height: 13px; flex: none; }
.box { width: 13px; height: 13px; background: #fff; border: 1px solid #333; flex: none; }
.dim { color: #8a8a8a; }
.dim .box { border-color: #ccc; }
.offset-row { margin: 12px 0 0 5px; }
.die-row { margin: 99px 0 0 5px; }

.group { border: 1px solid #d9d9d9; height: 316px; padding: 0 8px; flex: none; }
.group-label { height: 24px; font-size: 11.5px; line-height: 21px; }
.group .select { margin-bottom: 7px; }
.tech { height: 22px; margin-left: 1px; line-height: 20px; margin-bottom: 4px; }
.check-list { display: flex; flex-direction: column; gap: 8px; }
.fab-label { margin-top: 12px; height: 19px; line-height: 16px; }

/* preview */
.preview { width: 276px; flex: none; padding-top: 18px; display: flex; flex-direction: column; gap: 9px; }
.preview-top { height: 166px; border: 1px solid #666; background: #eee; flex: none; }
.preview-canvas { flex: 1; background: #001023; min-height: 0; }
.preview-svg { display: block; width: 276px; height: 287px; }
.preview-num { font-family: "DejaVu Sans", sans-serif; font-size: 36px; fill: #eab0b0; }
```
